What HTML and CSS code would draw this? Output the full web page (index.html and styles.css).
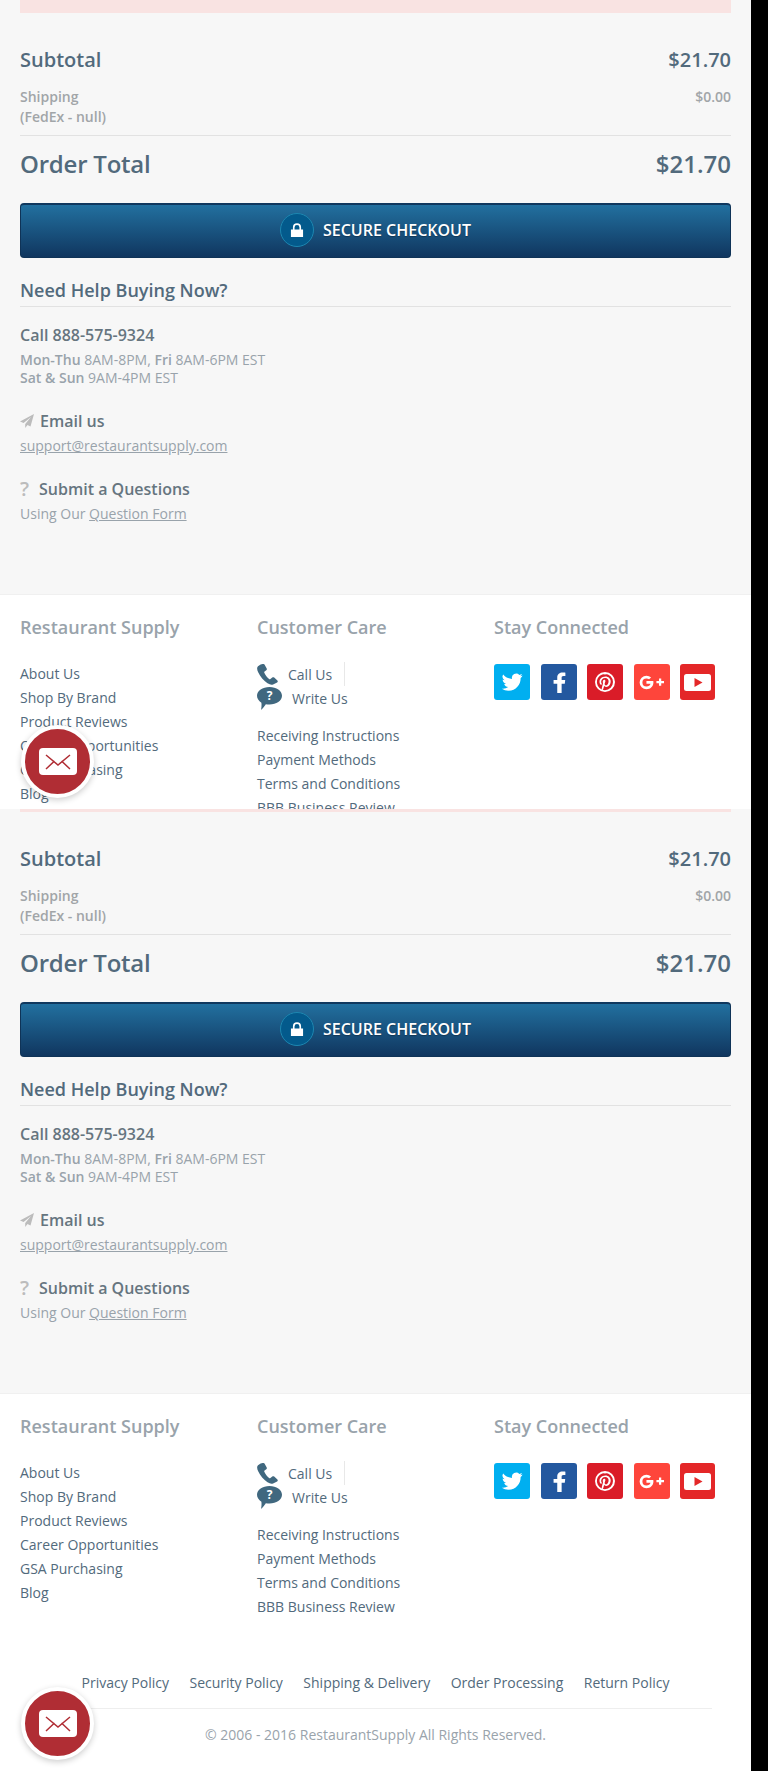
FILE: index.html

```html
<!DOCTYPE html>
<html lang="en">
<head>
  <meta charset="UTF-8">
  <title>Shopping Cart - RestaurantSupply</title>
  <meta name="viewport" content="width=device-width, initial-scale=1.0"/>
  <link rel="stylesheet" href="styles.css">
</head>
<body>
<div class="page">

  <section class="frame frame-first">
    <div class="alert alert-tall"><p>Free shipping is not available for this order, please try again</p></div>
    <div class="summary">
      <div class="row row-sub"><span>Subtotal</span><span>$21.70</span></div>
      <div class="row row-ship"><span>Shipping<br>(FedEx - null)</span><span>$0.00</span></div>
      <div class="row row-total"><span class="total-label">Order Total</span><span>$21.70</span></div>
      <a class="checkout" href="#">
        <span class="lock"><svg viewBox="0 0 12 12" width="14" height="14"><path d="M2.500 5.500V3.800a3.500 3.500 0 0 1 7 0v1.700h1.700V12H.8V5.500z M3.900 5.500h4.200V3.800a2.100 2.100 0 0 0-4.200 0z" fill="#fff" fill-rule="evenodd"/></svg></span>
        SECURE CHECKOUT
      </a>
      <h3 class="help-title">Need Help Buying Now?</h3>
      <h4 class="help-head">Call 888-575-9324</h4>
      <p class="help-text"><b>Mon-Thu</b> 8AM-8PM, <b>Fri</b> 8AM-6PM EST<br><b>Sat &amp; Sun</b> 9AM-4PM EST</p>
      <h4 class="help-head help-email">
        <svg class="plane" viewBox="0 0 14 14" width="14" height="14"><path d="M14 0 0 7.400l3.600 1.700L11 3 5.200 10v4l2.300-3 3 1.400z" fill="#bcbcbc"/></svg>
        Email us
      </h4>
      <p class="help-text"><a href="#">support@restaurantsupply.com</a></p>
      <h4 class="help-head help-question"><span class="qmark">?</span>Submit a Questions</h4>
      <p class="help-text">Using Our <a href="#">Question Form</a></p>
    </div>
    <footer class="footer">
      <div class="footer-cols">
        <div class="col">
          <h5>Restaurant Supply</h5>
          <ul class="links">
            <li><a href="#">About Us</a></li>
            <li><a href="#">Shop By Brand</a></li>
            <li><a href="#">Product Reviews</a></li>
            <li><a href="#">Career Opportunities</a></li>
            <li><a href="#">GSA Purchasing</a></li>
            <li><a href="#">Blog</a></li>
          </ul>
        </div>
        <div class="col">
          <h5>Customer Care</h5>
          <div class="contact">
            <a class="call" href="#">
              <svg viewBox="0 0 21 21" width="21" height="21"><path d="M3.600 0.400 1 2.200C-.4 3.400 0 6 1.300 8.600c1.900 3.800 5.300 8.300 9.200 10.700 2.300 1.400 4 1.700 5.600 1.100l4-1.900c.8-.5.9-1.500.3-2.100l-3.200-2.800c-.6-.5-1.300-.5-1.900-.1l-1.900 1.500c-.4.300-.9.300-1.300 0-1.900-1.500-3.700-3.900-4.800-6.300-.2-.5-.1-.9.300-1.200l1.700-1.200c.6-.5.700-1.200.4-1.800L7.800 1C7.300.1 6.400-.2 5.600 0z" fill="#40687f"/></svg>
              Call Us
            </a>
            <a class="write" href="#">
              <svg viewBox="0 0 25 23" width="25" height="23"><path d="M12.500 0C19.400 0 25 3.900 25 8.800s-5.600 8.800-12.500 8.800c-1.300 0-2.500-.1-3.700-.4C7.300 19.500 5 22.500 4 22.700c.5-2 .7-4.500.4-7C1.700 14 0 11.600 0 8.800 0 3.900 5.600 0 12.500 0z" fill="#40687f"/><text x="12.500" y="13.200" text-anchor="middle" class="write-q">?</text></svg>
              Write Us
            </a>
          </div>
          <ul class="links">
            <li><a href="#">Receiving Instructions</a></li>
            <li><a href="#">Payment Methods</a></li>
            <li><a href="#">Terms and Conditions</a></li>
            <li><a href="#">BBB Business Review</a></li>
          </ul>
        </div>
        <div class="col">
          <h5>Stay Connected</h5>
          <div class="social">
            <a class="soc tw" href="#"><svg viewBox="0 0 24 24" width="22" height="22"><path d="M23.500 4.900c-.8.400-1.700.600-2.600.800.900-.600 1.700-1.500 2-2.500-.9.500-1.900.9-2.900 1.100a4.700 4.700 0 0 0-8 4.300C8.100 8.400 4.700 6.600 2.400 3.700a4.700 4.700 0 0 0 1.500 6.300c-.8 0-1.500-.2-2.100-.6 0 2.300 1.600 4.200 3.800 4.700-.7.200-1.400.2-2.100.1.600 1.900 2.300 3.200 4.400 3.300A9.500 9.500 0 0 1 .9 19.400c2.100 1.300 4.600 2.100 7.200 2.100 8.700 0 13.600-7.300 13.300-13.900.9-.7 1.600-1.500 2.100-2.700z" fill="#fff"/></svg></a>
            <a class="soc fb" href="#"><svg viewBox="0 0 16 24" width="14" height="21"><path d="M11 24V13.400h3.600l.5-4.200H11V6.600c0-1.200.3-2 2.100-2h2.200V.9C14.800.8 13.500.7 12 .7 8.800.7 6 2.600 6 6.200v3H1.800v4.200H6V24z" fill="#fff"/></svg></a>
            <a class="soc pin" href="#"><svg viewBox="0 0 24 24" width="20" height="20"><path fill="#fff" fill-rule="evenodd" d="M12 0a12 12 0 1 1 0 24 12 12 0 0 1 0-24zm0 2.300a9.700 9.700 0 0 0-3.900 18.600c0-.7 0-1.500.2-2.200l1.300-5.300s-.3-.7-.3-1.600c0-1.500.9-2.600 1.900-2.600.9 0 1.300.7 1.300 1.500 0 .9-.6 2.200-.9 3.500-.2 1 .5 1.900 1.600 1.900 1.900 0 3.100-2.400 3.100-5.200 0-2.200-1.500-3.800-4.100-3.800-3 0-4.800 2.200-4.800 4.700 0 .9.200 1.500.6 2 .2.200.2.300.1.600l-.2.800c-.1.200-.3.300-.5.200-1.400-.6-2-2.100-2-3.800 0-2.800 2.400-6.200 7.100-6.200 3.800 0 6.300 2.800 6.300 5.700 0 3.900-2.200 6.800-5.400 6.800-1.100 0-2.100-.6-2.400-1.300l-.7 2.700c-.2.800-.6 1.500-1 2.100.8.200 1.700.4 2.600.4a9.700 9.700 0 0 0 0-19.400z"/></svg></a>
            <a class="soc gp" href="#"><svg viewBox="0 0 34 20" width="26" height="15"><path fill="#fff" d="M9.600 8.100v3.500h5.400c-.5 2.300-2.500 3.700-5.400 3.700a5.400 5.400 0 0 1 0-10.800c1.400 0 2.600.5 3.500 1.300l2.700-2.600A9.400 9.400 0 0 0 9.600.9a9.100 9.100 0 0 0 0 18.200c5.300 0 9.300-3.600 9.300-9.300 0-.6-.1-1.100-.2-1.700zM29.300 8V4.800h-3V8h-3.400v3h3.400v3.200h3V11h3.700V8z"/></svg></a>
            <a class="soc yt" href="#"><svg viewBox="0 0 27 17" width="27" height="17"><rect width="27" height="17" rx="2.500" fill="#fff"/><path d="M10.500 4v9l8-4.500z" fill="#e42728"/></svg></a>
          </div>
        </div>
      </div>
    </footer>
    <a class="mail-btn" href="#"><svg viewBox="0 0 38 27" width="38" height="27"><rect width="38" height="27" rx="4" fill="#fff"/><path d="M7 7l12 10 12-10M7 21l8.500-8M31 21l-8.500-8" fill="none" stroke="#b02d34" stroke-width="1.500"/></svg></a>
  </section>

  <section class="frame frame-second">
    <div class="alert alert-thin"></div>
    <div class="summary">
      <div class="row row-sub"><span>Subtotal</span><span>$21.70</span></div>
      <div class="row row-ship"><span>Shipping<br>(FedEx - null)</span><span>$0.00</span></div>
      <div class="row row-total"><span class="total-label">Order Total</span><span>$21.70</span></div>
      <a class="checkout" href="#">
        <span class="lock"><svg viewBox="0 0 12 12" width="14" height="14"><path d="M2.500 5.500V3.800a3.500 3.500 0 0 1 7 0v1.700h1.700V12H.8V5.500z M3.900 5.500h4.200V3.800a2.100 2.100 0 0 0-4.200 0z" fill="#fff" fill-rule="evenodd"/></svg></span>
        SECURE CHECKOUT
      </a>
      <h3 class="help-title">Need Help Buying Now?</h3>
      <h4 class="help-head">Call 888-575-9324</h4>
      <p class="help-text"><b>Mon-Thu</b> 8AM-8PM, <b>Fri</b> 8AM-6PM EST<br><b>Sat &amp; Sun</b> 9AM-4PM EST</p>
      <h4 class="help-head help-email">
        <svg class="plane" viewBox="0 0 14 14" width="14" height="14"><path d="M14 0 0 7.400l3.600 1.700L11 3 5.200 10v4l2.300-3 3 1.400z" fill="#bcbcbc"/></svg>
        Email us
      </h4>
      <p class="help-text"><a href="#">support@restaurantsupply.com</a></p>
      <h4 class="help-head help-question"><span class="qmark">?</span>Submit a Questions</h4>
      <p class="help-text">Using Our <a href="#">Question Form</a></p>
    </div>
    <footer class="footer">
      <div class="footer-cols">
        <div class="col">
          <h5>Restaurant Supply</h5>
          <ul class="links">
            <li><a href="#">About Us</a></li>
            <li><a href="#">Shop By Brand</a></li>
            <li><a href="#">Product Reviews</a></li>
            <li><a href="#">Career Opportunities</a></li>
            <li><a href="#">GSA Purchasing</a></li>
            <li><a href="#">Blog</a></li>
          </ul>
        </div>
        <div class="col">
          <h5>Customer Care</h5>
          <div class="contact">
            <a class="call" href="#">
              <svg viewBox="0 0 21 21" width="21" height="21"><path d="M3.600 0.400 1 2.200C-.4 3.400 0 6 1.300 8.600c1.900 3.800 5.300 8.300 9.200 10.700 2.300 1.400 4 1.700 5.600 1.100l4-1.900c.8-.5.9-1.500.3-2.100l-3.200-2.800c-.6-.5-1.300-.5-1.900-.1l-1.900 1.500c-.4.300-.9.300-1.300 0-1.900-1.500-3.700-3.900-4.800-6.300-.2-.5-.1-.9.300-1.200l1.700-1.200c.6-.5.700-1.200.4-1.800L7.800 1C7.300.1 6.400-.2 5.600 0z" fill="#40687f"/></svg>
              Call Us
            </a>
            <a class="write" href="#">
              <svg viewBox="0 0 25 23" width="25" height="23"><path d="M12.500 0C19.400 0 25 3.900 25 8.800s-5.600 8.800-12.500 8.800c-1.300 0-2.500-.1-3.700-.4C7.300 19.500 5 22.500 4 22.700c.5-2 .7-4.500.4-7C1.700 14 0 11.600 0 8.800 0 3.900 5.600 0 12.500 0z" fill="#40687f"/><text x="12.500" y="13.200" text-anchor="middle" class="write-q">?</text></svg>
              Write Us
            </a>
          </div>
          <ul class="links">
            <li><a href="#">Receiving Instructions</a></li>
            <li><a href="#">Payment Methods</a></li>
            <li><a href="#">Terms and Conditions</a></li>
            <li><a href="#">BBB Business Review</a></li>
          </ul>
        </div>
        <div class="col">
          <h5>Stay Connected</h5>
          <div class="social">
            <a class="soc tw" href="#"><svg viewBox="0 0 24 24" width="22" height="22"><path d="M23.500 4.900c-.8.400-1.700.600-2.600.800.900-.600 1.700-1.500 2-2.500-.9.500-1.900.9-2.900 1.100a4.700 4.700 0 0 0-8 4.300C8.100 8.400 4.700 6.600 2.400 3.700a4.700 4.700 0 0 0 1.500 6.300c-.8 0-1.500-.2-2.100-.6 0 2.300 1.600 4.200 3.800 4.700-.7.200-1.400.2-2.100.1.600 1.900 2.300 3.200 4.400 3.300A9.500 9.500 0 0 1 .9 19.400c2.100 1.300 4.600 2.100 7.200 2.100 8.700 0 13.600-7.300 13.300-13.900.9-.7 1.600-1.500 2.100-2.700z" fill="#fff"/></svg></a>
            <a class="soc fb" href="#"><svg viewBox="0 0 16 24" width="14" height="21"><path d="M11 24V13.400h3.600l.5-4.200H11V6.600c0-1.200.3-2 2.100-2h2.200V.9C14.800.8 13.500.7 12 .7 8.800.7 6 2.600 6 6.200v3H1.800v4.200H6V24z" fill="#fff"/></svg></a>
            <a class="soc pin" href="#"><svg viewBox="0 0 24 24" width="20" height="20"><path fill="#fff" fill-rule="evenodd" d="M12 0a12 12 0 1 1 0 24 12 12 0 0 1 0-24zm0 2.300a9.700 9.700 0 0 0-3.900 18.600c0-.7 0-1.500.2-2.200l1.300-5.300s-.3-.7-.3-1.600c0-1.500.9-2.600 1.900-2.600.9 0 1.300.7 1.300 1.500 0 .9-.6 2.200-.9 3.500-.2 1 .5 1.900 1.600 1.900 1.900 0 3.100-2.400 3.100-5.200 0-2.200-1.500-3.800-4.100-3.800-3 0-4.800 2.200-4.800 4.700 0 .9.200 1.500.6 2 .2.200.2.300.1.600l-.2.800c-.1.200-.3.300-.5.200-1.400-.6-2-2.100-2-3.800 0-2.800 2.400-6.200 7.100-6.200 3.800 0 6.300 2.800 6.300 5.700 0 3.900-2.200 6.800-5.400 6.800-1.100 0-2.100-.6-2.400-1.300l-.7 2.700c-.2.800-.6 1.500-1 2.100.8.200 1.700.4 2.600.4a9.700 9.700 0 0 0 0-19.400z"/></svg></a>
            <a class="soc gp" href="#"><svg viewBox="0 0 34 20" width="26" height="15"><path fill="#fff" d="M9.600 8.100v3.500h5.400c-.5 2.300-2.500 3.700-5.400 3.700a5.400 5.400 0 0 1 0-10.800c1.400 0 2.600.5 3.500 1.300l2.700-2.600A9.400 9.400 0 0 0 9.600.9a9.100 9.100 0 0 0 0 18.200c5.300 0 9.300-3.600 9.300-9.300 0-.6-.1-1.100-.2-1.700zM29.300 8V4.800h-3V8h-3.400v3h3.400v3.200h3V11h3.700V8z"/></svg></a>
            <a class="soc yt" href="#"><svg viewBox="0 0 27 17" width="27" height="17"><rect width="27" height="17" rx="2.500" fill="#fff"/><path d="M10.500 4v9l8-4.500z" fill="#e42728"/></svg></a>
          </div>
        </div>
      </div>
      <nav class="policy">
        <a href="#">Privacy Policy</a>
        <a href="#">Security Policy</a>
        <a href="#">Shipping &amp; Delivery</a>
        <a href="#">Order Processing</a>
        <a href="#">Return Policy</a>
      </nav>
      <p class="copyright">© 2006 - 2016 RestaurantSupply All Rights Reserved.</p>
    </footer>
    <a class="mail-btn" href="#"><svg viewBox="0 0 38 27" width="38" height="27"><rect width="38" height="27" rx="4" fill="#fff"/><path d="M7 7l12 10 12-10M7 21l8.500-8M31 21l-8.500-8" fill="none" stroke="#b02d34" stroke-width="1.500"/></svg></a>
  </section>

</div>
</body>
</html>
```

FILE: styles.css

```css
* {
  box-sizing: border-box;
}
html, body {
  margin: 0;
  background: #000;
}
body {
  font-family: "Open Sans", sans-serif;
  font-size: 14px;
  color: #526a7c;
}
a {
  color: inherit;
  text-decoration: none;
}
.page {
  width: 751px;
  height: 1771px;
  background: #f7f7f7;
}
.frame {
  position: relative;
  overflow: hidden;
}
.frame-first {
  height: 809px;
}
.frame-second {
  height: 962px;
}
.alert {
  margin: 0 20px;
  background: #f9e3e2;
  overflow: hidden;
}
.alert p {
  margin: -20px 0 0;
  padding-left: 12px;
  color: #e0232a;
  font-size: 14px;
  line-height: 24px;
  font-weight: 600;
}
.alert-tall {
  height: 13px;
}
.alert-thin {
  height: 3px;
}
.summary {
  height: 581px;
  padding: 33px 20px 0;
}
.row {
  display: flex;
  justify-content: space-between;
}
.row-sub {
  font-size: 20px;
  line-height: 28px;
  font-weight: 600;
}
.row-ship {
  margin-top: 13px;
  padding-bottom: 8px;
  border-bottom: 1px solid #e2e2e2;
  color: #a1a5a8;
  font-size: 14px;
  line-height: 20px;
  font-weight: 600;
}
.row-total {
  margin-top: 10px;
  font-size: 24px;
  line-height: 36px;
  font-weight: 600;
}
.total-label {
  letter-spacing: -0.22px;
}
.checkout {
  display: flex;
  align-items: center;
  justify-content: center;
  gap: 9px;
  height: 55px;
  margin-top: 21px;
  padding-bottom: 2px;
  border: 1px solid #0f3357;
  border-top: 2px solid #10385e;
  border-radius: 4px;
  background: linear-gradient(#22709f, #10365f);
  color: #fff;
  font-size: 16px;
  font-weight: 600;
  text-shadow: 0 1px 1px rgba(0,0,0,0.3);
}
.lock {
  display: flex;
  align-items: center;
  justify-content: center;
  width: 34px;
  height: 34px;
  border: 1px solid #1d86b0;
  border-radius: 50%;
  background: #035a8c;
}
.help-title {
  margin: 19px 0 0;
  padding-bottom: 3px;
  border-bottom: 1px solid #e2e2e2;
  font-size: 18px;
  line-height: 26px;
  font-weight: 600;
}
.help-head {
  margin: 17px 0 0;
  color: #66757f;
  font-size: 16px;
  line-height: 22px;
  font-weight: 600;
}
.help-text {
  margin: 5px 0 0;
  color: #99a3ab;
  font-size: 14px;
  line-height: 18px;
}
.help-text b {
  font-weight: 600;
}
.help-text a {
  text-decoration: underline;
}
.help-email {
  display: flex;
  align-items: center;
  gap: 6px;
  margin-top: 23px;
}
.help-question {
  display: flex;
  align-items: center;
  margin-top: 23px;
}
.qmark {
  width: 19px;
  color: #bcbcbc;
  font-size: 20px;
}
.footer {
  height: 378px;
  padding-top: 20px;
  background: #fff;
  border-top: 1px solid #f0f0f0;
}
.footer-cols {
  display: flex;
  height: 221px;
  padding-left: 20px;
}
.col {
  width: 237px;
}
.col h5 {
  margin: 0;
  color: #99a3ab;
  font-size: 18px;
  line-height: 24px;
  font-weight: 600;
}
.links {
  list-style: none;
  margin: 0;
  padding: 0;
}
.col h5 + .links {
  margin-top: 23px;
}
.links li {
  line-height: 24px;
}
.contact {
  display: flex;
  flex-direction: column;
  align-items: flex-start;
  margin: 23px 0 14px;
}
.call, .write {
  display: flex;
  align-items: center;
  gap: 10px;
  height: 24px;
}
.call {
  padding-right: 12px;
  border-right: 1px solid #e8e8e8;
}
.write-q {
  fill: #fff;
  font-family: "Open Sans", sans-serif;
  font-size: 12px;
  font-weight: 700;
}
.social {
  display: flex;
  gap: 10.5px;
  margin-top: 25px;
}
.soc {
  display: flex;
  align-items: center;
  justify-content: center;
  width: 36px;
  height: 36px;
  border-radius: 3px;
}
.tw { background: #00aff0; }
.fb { background: #23589f; }
.pin { background: #da1c28; }
.gp { background: #fe453b; }
.yt { background: #e42728; width: 35px; }
.policy {
  display: flex;
  justify-content: center;
  gap: 20.5px;
  margin: 0 39px;
  padding: 36px 0 13px;
  border-bottom: 1px solid #eee;
  line-height: 24px;
}
.copyright {
  margin: 14px 0 0;
  text-align: center;
  color: #99a3ab;
  line-height: 24px;
}
.mail-btn {
  position: absolute;
  left: 21px;
  bottom: 11px;
  display: flex;
  align-items: center;
  justify-content: center;
  width: 73px;
  height: 73px;
  border: 4px solid #fff;
  border-radius: 50%;
  background: #b02d34;
  box-shadow: 0 2px 6px rgba(0,0,0,0.2);
}
```
